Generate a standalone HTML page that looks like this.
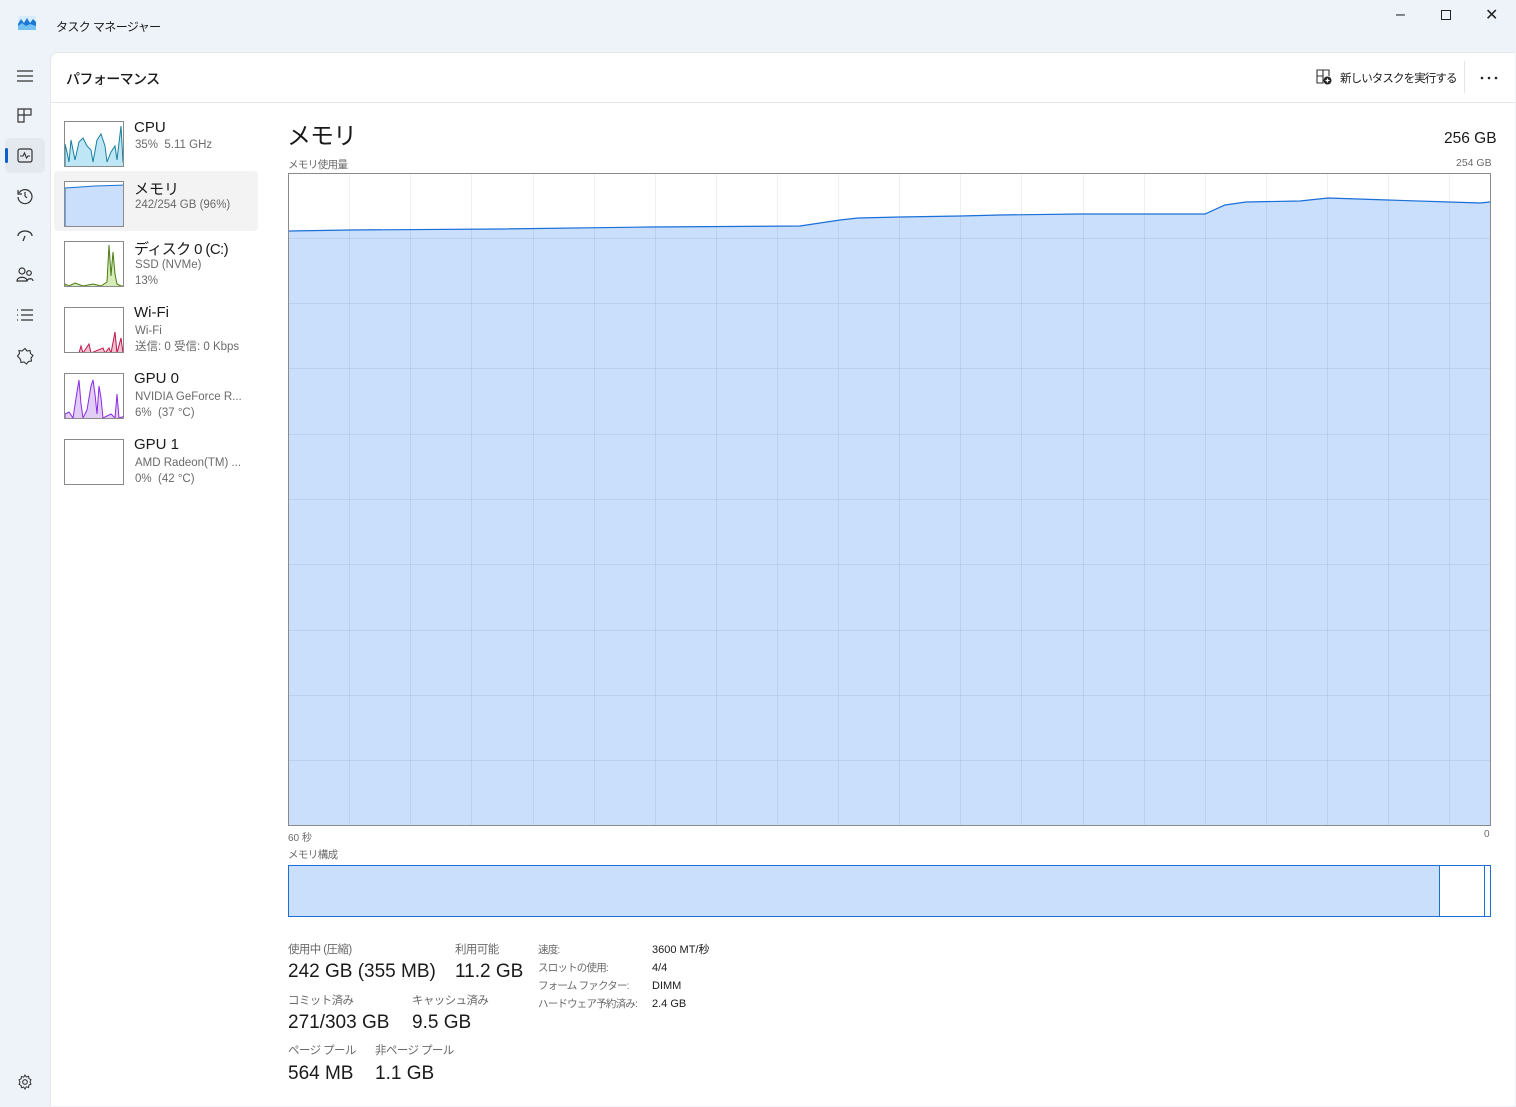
<!DOCTYPE html>
<html><head><meta charset="utf-8"><style>
*{margin:0;padding:0;box-sizing:border-box}
body{width:1516px;height:1107px;overflow:hidden;background:#eef3f9;font-family:"Liberation Sans","Noto Sans CJK JP",sans-serif;color:#1a1a1a;position:relative}
.abs{position:absolute}
.main{position:absolute;left:50px;top:52px;width:1465px;height:1054px;background:#fff;border-top-left-radius:8px;border-left:1px solid #e3e6ea;border-top:1px solid #e3e6ea}
.t{position:absolute;white-space:nowrap}
.g{color:#6a6a6a}
.jp{letter-spacing:-0.6px}
.thumb{position:absolute;left:64px;width:60px;height:46px;border:1px solid #8a8a8a;background:#fff;overflow:hidden}
.nm{font-size:15px;color:#1a1a1a}
.sub{font-size:11.5px;color:#6a6a6a;line-height:15.5px}
.ic{position:absolute;left:16px}
</style></head><body>
<svg class="abs" style="left:18px;top:16px" width="18" height="14" viewBox="0 0 18 14"><rect width="18" height="14" fill="#d6ecfb"/><path d="M0 8 L3 3 L6 7 L9 2 L12 7 L15 3 L18 6 V14 H0Z" fill="#1a78d4"/><path d="M0 10 L4 7 L8 10 L12 8 L18 10 V14 H0Z" fill="#74c0f0"/></svg>
<div class="t jp" style="left:56px;top:18px;font-size:12px">タスク マネージャー</div>
<div class="t" style="left:1396px;top:6px;font-size:16px;color:#222">&#x2013;</div>
<div class="abs" style="left:1441px;top:10px;width:10px;height:10px;border:1px solid #222"></div>
<div class="t" style="left:1485px;top:5px;font-size:16px;color:#222">&#x2715;</div>
<svg class="ic" style="top:68px" width="18" height="16"><path d="M1 3h16M1 8h16M1 13h16" stroke="#333" stroke-width="1.2"/></svg>
<svg class="ic" style="top:107px" width="18" height="18"><path d="M2 2h6v6H2zM2 8h6v7H2zM8 2h7v6H8z" fill="none" stroke="#333" stroke-width="1.2"/></svg>
<div class="abs" style="left:5px;top:138px;width:40px;height:35px;background:#e4e9f0;border-radius:5px"></div>
<div class="abs" style="left:5px;top:148px;width:3px;height:15px;background:#0f5fc7;border-radius:2px"></div>
<svg class="ic" style="top:147px" width="18" height="18"><rect x="2" y="2" width="14" height="13" rx="2" fill="none" stroke="#333" stroke-width="1.2"/><path d="M4 9h3l1.5-3 2 5 1.5-2h2" fill="none" stroke="#333" stroke-width="1.1"/></svg>
<svg class="ic" style="top:187px" width="18" height="18"><path d="M3 6A7 7 0 1 1 2 10" fill="none" stroke="#333" stroke-width="1.2"/><path d="M2 3v4h4" fill="none" stroke="#333" stroke-width="1.2"/><path d="M9 5v4l2 2" fill="none" stroke="#333" stroke-width="1.2"/></svg>
<svg class="ic" style="top:227px" width="18" height="18"><path d="M2 9a7 5 0 0 1 14 0M9 9l-2 5" fill="none" stroke="#333" stroke-width="1.3"/></svg>
<svg class="ic" style="top:266px" width="18" height="18"><circle cx="6" cy="5" r="3" fill="none" stroke="#333" stroke-width="1.2"/><circle cx="13" cy="7" r="2.3" fill="none" stroke="#333" stroke-width="1.2"/><path d="M1 15c0-5 10-5 10 0zM11 15c1-3 6-3 6 0" fill="none" stroke="#333" stroke-width="1.2"/></svg>
<svg class="ic" style="top:307px" width="18" height="16"><path d="M1 3h1M1 8h1M1 13h1M5 3h12M5 8h12M5 13h12" stroke="#333" stroke-width="1.3"/></svg>
<svg class="ic" style="top:347px" width="18" height="18"><path d="M9 1.5l2 2.5 3-.5.5 3 2.5 2-2 2.5.5 3-3 .5-2 2.5-2.5-2-3 .5-.5-3L1.5 9l2-2.5L3 3.5l3 .5z" fill="none" stroke="#333" stroke-width="1.1"/></svg>
<svg class="ic" style="left:17px;top:1074px" width="16" height="16"><circle cx="8" cy="8" r="2.3" fill="none" stroke="#333" stroke-width="1.1"/><path d="M8 1l1.3 2 2.3-.7.3 2.3 2.1 1.1-1 2.2 1 2.2-2.1 1.1-.3 2.3-2.3-.7L8 15l-1.3-2-2.3.7-.3-2.3L2 10.3l1-2.2-1-2.2 2.1-1.1.3-2.3 2.3.7z" fill="none" stroke="#333" stroke-width="1"/></svg>

<div class="main"></div>
<div class="t jp" style="left:66px;top:69px;font-size:14px;font-weight:500">パフォーマンス</div>
<div class="abs" style="left:51px;top:102px;width:1464px;height:1px;background:#e5e5e5"></div>
<svg class="abs" style="left:1316px;top:69px" width="16" height="16"><path d="M1 1h6v6H1zM1 7h6v7H1zM7 1h6v6" fill="none" stroke="#333" stroke-width="1.1"/><circle cx="11.5" cy="11.5" r="4" fill="#222"/><path d="M11.5 9.5v4M9.5 11.5h4" stroke="#fff" stroke-width="1.2"/></svg>
<div class="t jp" style="left:1340px;top:70px;font-size:11.5px;letter-spacing:-0.9px">新しいタスクを実行する</div>
<div class="abs" style="left:1464px;top:61px;width:1px;height:32px;background:#e5e5e5"></div>
<svg class="abs" style="left:1480px;top:76px" width="18" height="4"><circle cx="2" cy="2" r="1.3" fill="#222"/><circle cx="9" cy="2" r="1.3" fill="#222"/><circle cx="16" cy="2" r="1.3" fill="#222"/></svg>

<div class="abs" style="left:54px;top:171px;width:204px;height:60px;background:#f3f3f3;border-radius:4px"></div>
<div class="thumb" style="top:121px"><svg width="60" height="46"><path d="M0 46V22L2 30 4 40 6 18 10 38 14 20 18 16 22 24 26 28 28 40 32 18 36 12 40 24 42 40 46 30 50 24 52 38 56 4 58 40 60 40V46Z" fill="#bfe6f5" stroke="#17809e" stroke-width="1"/></svg></div>
<div class="t nm" style="left:134px;top:119px">CPU</div>
<div class="t sub" style="left:135px;top:138px">35%&nbsp; 5.11 GHz</div>
<div class="thumb" style="top:181px"><svg width="60" height="46"><path d="M0 46V6L30 4 60 3V46Z" fill="#c9dffb" stroke="#1a6fd8" stroke-width="1"/></svg></div>
<div class="t nm" style="left:134px;top:178px">メモリ</div>
<div class="t sub" style="left:135px;top:198px">242/254 GB (96%)</div>
<div class="thumb" style="top:241px"><svg width="60" height="46"><path d="M0 46V42L4 44 10 41 18 44 28 42 36 44 42 40 44 3 46 34 48 10 50 32 52 42 56 44 60 44V46Z" fill="#d5ecb8" stroke="#4b7c12" stroke-width="1"/></svg></div>
<div class="t nm jp" style="left:134px;top:238px">ディスク 0 (C:)</div>
<div class="t sub" style="left:135px;top:258px">SSD (NVMe)<br>13%</div>
<div class="thumb" style="top:307px"><svg width="60" height="46"><path d="M0 46V45L14 45 16 38 18 45 24 36 26 45 38 40 40 45 44 40 46 45 50 24 52 45 56 30 58 45 60 45V46Z" fill="#f0c0d0" stroke="#c3174a" stroke-width="1"/></svg></div>
<div class="t nm" style="left:134px;top:304px">Wi-Fi</div>
<div class="t sub" style="left:135px;top:324px">Wi-Fi<br>送信: 0 受信: 0 Kbps</div>
<div class="thumb" style="top:373px"><svg width="60" height="46"><path d="M0 46V40L4 38 8 44 12 18 14 6 16 30 18 44 22 36 26 12 28 6 30 20 32 40 34 12 36 24 38 44 46 40 50 44 52 20 54 44 60 42V46Z" fill="#e2cdf7" stroke="#8a2be2" stroke-width="1"/></svg></div>
<div class="t nm" style="left:134px;top:370px">GPU 0</div>
<div class="t sub" style="left:135px;top:390px">NVIDIA GeForce R...<br>6%&nbsp; (37 °C)</div>
<div class="thumb" style="top:439px"></div>
<div class="t nm" style="left:134px;top:436px">GPU 1</div>
<div class="t sub" style="left:135px;top:456px">AMD Radeon(TM) ...<br>0%&nbsp; (42 °C)</div>

<div class="t" style="left:287px;top:116px;font-size:24px;letter-spacing:-1px">メモリ</div>
<div class="t" style="left:1444px;top:130px;font-size:15.5px">256 GB</div>
<div class="t g jp" style="left:288px;top:157px;font-size:10.5px">メモリ使用量</div>
<div class="t g" style="left:1456px;top:157px;font-size:10.5px">254 GB</div>
<svg class="abs" style="left:288px;top:173px" width="1203" height="653">
<path d="M1 58 L62 57 L212 56 L362 54 L512 53 L552 47 L570 45 L612 44 L672 43 L712 42 L792 41 L917 41 L937 32 L958 29 L1012 28 L1040 25 L1100 27 L1161 29 L1192 30 L1202 29 V652 H1Z" fill="#c9dffb"/>
<g stroke="rgba(0,0,0,0.06)" stroke-width="1">
<path d="M61.5 0V653M122.5 0V653M183.5 0V653M245.5 0V653M306.5 0V653M367.5 0V653M428.5 0V653M489.5 0V653M550.5 0V653M611.5 0V653M672.5 0V653M733.5 0V653M795.5 0V653M856.5 0V653M917.5 0V653M978.5 0V653M1039.5 0V653M1100.5 0V653M1161.5 0V653"/>
<path d="M0 65.5H1203M0 130.5H1203M0 195.5H1203M0 261.5H1203M0 326.5H1203M0 391.5H1203M0 457.5H1203M0 522.5H1203M0 587.5H1203"/>
</g>
<path d="M1 58 L62 57 L212 56 L362 54 L512 53 L552 47 L570 45 L612 44 L672 43 L712 42 L792 41 L917 41 L937 32 L958 29 L1012 28 L1040 25 L1100 27 L1161 29 L1192 30 L1202 29" fill="none" stroke="#1a6fd8" stroke-width="1.2"/>
<rect x="0.5" y="0.5" width="1202" height="652" fill="none" stroke="#8a8a8a"/>
</svg>
<div class="t g" style="left:288px;top:829px;font-size:10px">60 秒</div>
<div class="t g" style="left:1484px;top:829px;font-size:10px">0</div>
<div class="t g jp" style="left:288px;top:847px;font-size:10.5px">メモリ構成</div>
<div class="abs" style="left:288px;top:865px;width:1203px;height:52px;border:1px solid #1a6fd8;background:#fff">
<div class="abs" style="left:0;top:0;width:1151px;height:50px;background:#c9dffb;border-right:1px solid #1a6fd8"></div>
<div class="abs" style="left:1195px;top:0;width:1px;height:50px;background:#1a6fd8"></div>
</div>

<div class="t g jp" style="left:288px;top:941px;font-size:11.5px">使用中 (圧縮)</div>
<div class="t" style="left:288px;top:961px;font-size:19px">242 GB (355 MB)</div>
<div class="t g jp" style="left:455px;top:941px;font-size:11.5px">利用可能</div>
<div class="t" style="left:455px;top:961px;font-size:19px">11.2 GB</div>
<div class="t g jp" style="left:288px;top:992px;font-size:11.5px">コミット済み</div>
<div class="t" style="left:288px;top:1012px;font-size:19px">271/303 GB</div>
<div class="t g jp" style="left:412px;top:992px;font-size:11.5px">キャッシュ済み</div>
<div class="t" style="left:412px;top:1012px;font-size:19px">9.5 GB</div>
<div class="t g jp" style="left:288px;top:1042px;font-size:11.5px">ページ プール</div>
<div class="t" style="left:288px;top:1063px;font-size:19px">564 MB</div>
<div class="t g jp" style="left:375px;top:1042px;font-size:11.5px">非ページ プール</div>
<div class="t" style="left:375px;top:1063px;font-size:19px">1.1 GB</div>
<div class="t g" style="left:538px;top:941px;font-size:10.5px;line-height:18px;letter-spacing:-0.8px">速度:<br>スロットの使用:<br>フォーム ファクター:<br>ハードウェア予約済み:</div>
<div class="t" style="left:652px;top:941px;font-size:11px;line-height:18px">3600 MT/秒<br>4/4<br>DIMM<br>2.4 GB</div>
</body></html>
